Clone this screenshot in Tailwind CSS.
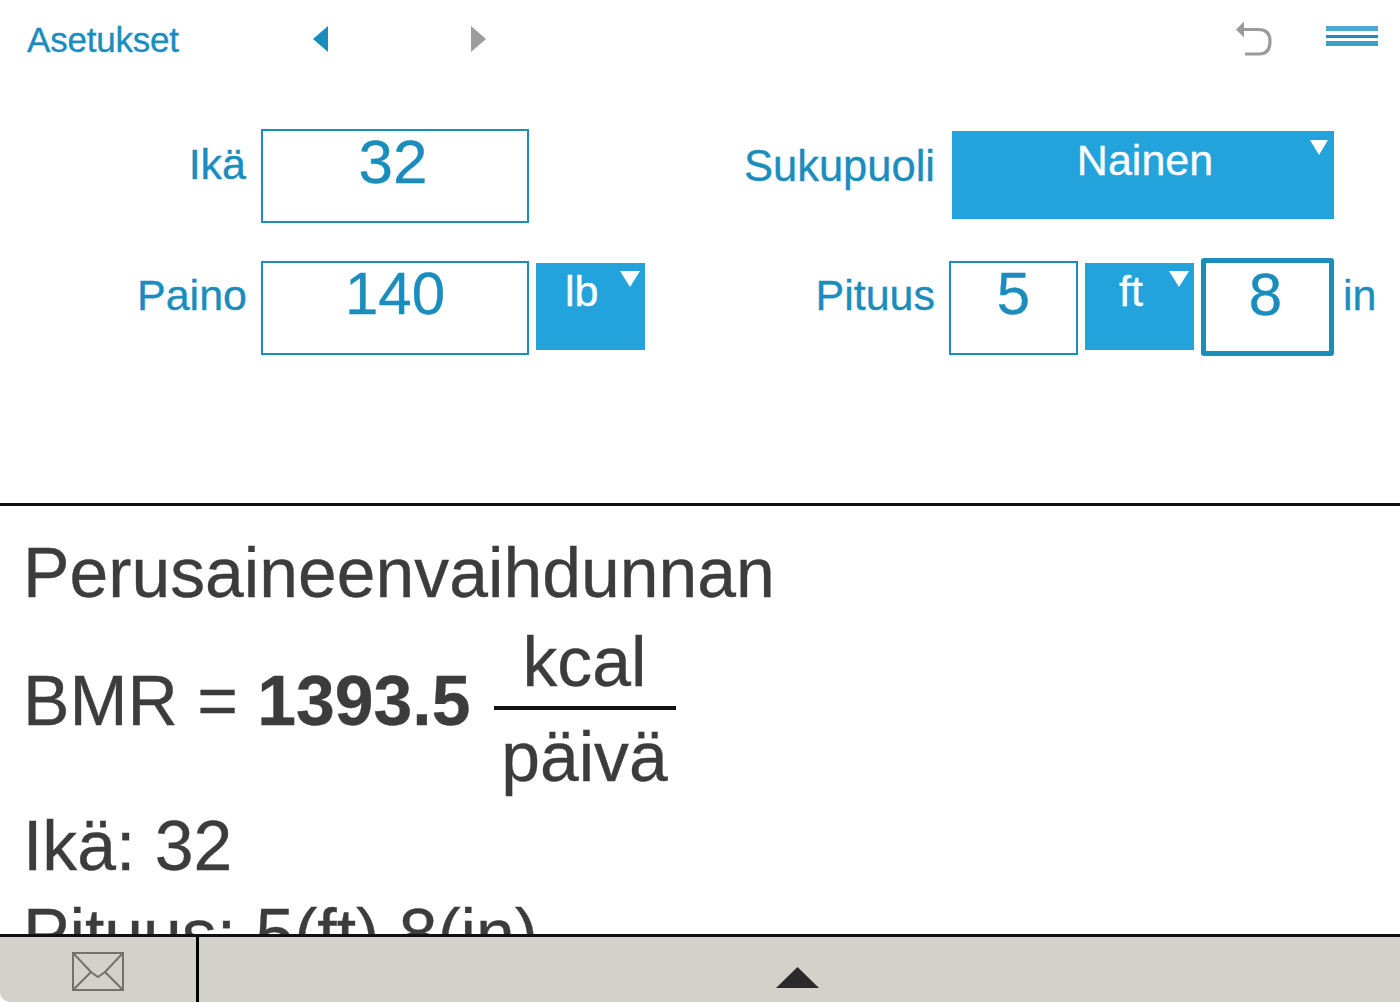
<!DOCTYPE html>
<html><head><meta charset="utf-8"><script src="https://cdn.jsdelivr.net/npm/@tailwindcss/browser@4"></script></head>
<body class="bg-white overflow-hidden">
<div class="w-[1400px] h-[1002px] flex flex-col font-['Liberation_Sans',Arial,sans-serif] overflow-hidden [-webkit-text-stroke:0.35px]">
  <div class="h-[503px] shrink-0 flex flex-col text-[#1b8dbd]">
    <header class="h-[80px] flex items-start relative">
      <span class="absolute left-[27px] top-[20px] text-[35px] leading-[40px] tracking-[-0.2px]">Asetukset</span>
      <svg class="absolute left-[312px] top-[25px]" width="17" height="28" viewBox="0 0 17 28"><path d="M16 1 L1 14 L16 27Z" fill="#1b8dbd"/></svg>
      <svg class="absolute left-[470px] top-[25px]" width="17" height="28" viewBox="0 0 17 28"><path d="M1 1 L16 14 L1 27Z" fill="#9c9c9c"/></svg>
      <svg class="absolute left-[1232px] top-[18px]" width="44" height="42" viewBox="0 0 44 42" fill="none"><path d="M6 11.5 H26 Q38 11.5 38 23 Q38 36 27 36 H13" stroke="#9a9a9a" stroke-width="3.2"/><path d="M12 3.5 L4 11.5 L12 19.5Z" fill="#9a9a9a"/></svg>
      <div class="absolute left-[1326px] top-[26px] w-[52px] flex flex-col">
        <div class="h-[5px] bg-[#4fa9d0]"></div><div class="h-[3px] mt-[4px] bg-[#1b8dbd]"></div><div class="h-[5px] mt-[3px] bg-[#3c9fc9]"></div>
      </div>
    </header>
    <div class="grid grid-cols-[700px_700px] pt-[49px]">
      <div class="flex items-start h-[132px]">
        <span class="w-[246px] text-right text-[43px] leading-[52px] mt-[9px]">Ikä</span>
        <div class="ml-[15px] w-[268px] h-[94px] border-2 border-[#1b8dbd] text-center text-[62px] leading-[62px] pr-[4px]">32</div>
      </div>
      <div class="flex items-start h-[132px]">
        <span class="w-[235px] text-right text-[43.5px] leading-[52px] mt-[11px]">Sukupuoli</span>
        <div class="relative ml-[17px] mt-[2px] w-[382px] h-[88px] bg-[#22a3dc] text-white text-center text-[43px] leading-[58px] pl-[4px]">Nainen
          <svg class="absolute right-[6px] top-[9px]" width="18" height="15" viewBox="0 0 18 15"><path d="M0 0H18L9 15Z" fill="#fff"/></svg>
        </div>
      </div>
      <div class="flex items-start">
        <span class="w-[247px] text-right text-[43px] leading-[52px] mt-[8px]">Paino</span>
        <div class="ml-[14px] w-[268px] h-[94px] border-2 border-[#1b8dbd] text-center text-[60px] leading-[62px]">140</div>
        <div class="relative ml-[7px] mt-[2px] w-[109px] h-[87px] bg-[#22a3dc] text-white text-[43px] leading-[56px] pl-[29px]">lb
          <svg class="absolute right-[5px] top-[8px]" width="20" height="16" viewBox="0 0 20 16"><path d="M0 0H20L10 16Z" fill="#fff"/></svg>
        </div>
      </div>
      <div class="flex items-start">
        <span class="w-[235px] text-right text-[43px] leading-[52px] mt-[8px]">Pituus</span>
        <div class="ml-[14px] w-[129px] h-[94px] border-2 border-[#1b8dbd] text-center text-[60px] leading-[62px]">5</div>
        <div class="relative ml-[7px] mt-[2px] w-[109px] h-[87px] bg-[#22a3dc] text-white text-[43px] leading-[56px] pl-[34px]">ft
          <svg class="absolute right-[5px] top-[8px]" width="20" height="16" viewBox="0 0 20 16"><path d="M0 0H20L10 16Z" fill="#fff"/></svg>
        </div>
        <div class="ml-[7px] -mt-[3px] w-[133px] h-[98px] border-[5px] border-[#1b8dbd] rounded-[3px] text-center text-[60px] leading-[62px] pr-[4px] pt-[1px]">8</div>
        <span class="ml-[9px] text-[43px] leading-[52px] mt-[8px]">in</span>
      </div>
    </div>
  </div>
  <main class="flex-1 min-h-0 overflow-hidden border-t-[3px] border-[#111] pt-[23px] pl-[23px] text-[69.7px] leading-[88px] text-[#3c3c3c]">
    <p>Perusaineenvaihdunnan</p>
    <div class="flex items-start h-[185px]">
      <span class="mt-[40px]">BMR = <b>1393.5</b></span>
      <div class="ml-[24px] w-[182px] text-center mt-[1px]">
        <div class="pr-[2px]">kcal</div>
        <div class="h-[4px] bg-[#111]"></div>
        <div class="mt-[3px] pr-[2px]">päivä</div>
      </div>
    </div>
    <p>Ikä: 32</p>
    <p>Pituus: 5(ft) 8(in)</p>
  </main>
  <footer class="h-[68px] shrink-0 border-t-[3px] border-[#111] bg-[#d2d2ca] flex rounded-bl-[10px]">
    <div class="w-[199px] shrink-0 border-r-[3px] border-black flex items-start pl-[72px] pt-[15px]">
      <svg width="52" height="39" viewBox="0 0 52 39" fill="none" stroke="#71716e" stroke-width="2"><rect x="1" y="1" width="50" height="37"/><path d="M1 1 L19 20 L26 25 L33 20 L51 1 M1 38 L19 20 M51 38 L33 20"/></svg>
    </div>
    <div class="flex-1 flex items-start justify-center pt-[30px] pr-[4px]">
      <svg width="43" height="22" viewBox="0 0 43 22"><path d="M21.5 0 L43 21 H0Z" fill="#2a2a2a"/></svg>
    </div>
  </footer>
</div>
</body></html>
